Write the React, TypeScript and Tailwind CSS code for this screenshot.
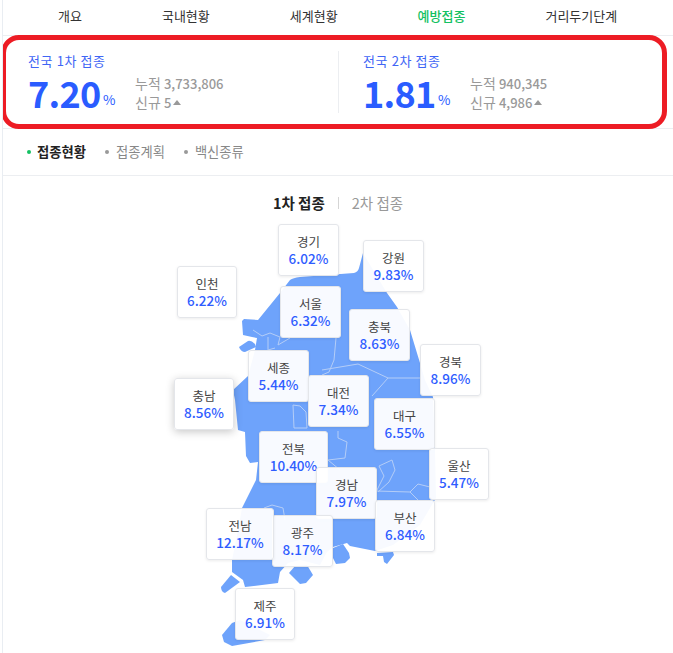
const navItems = [
  { label: "개요", active: false },
  { label: "국내현황", active: false },
  { label: "세계현황", active: false },
  { label: "예방접종", active: true },
  { label: "거리두기단계", active: false },
];

// 지도 위 라벨: 위치 자체가 콘텐츠라 absolute 사용
const regions = [
  { name: "경기", value: "6.02%", pos: "left-[275px] top-[48px] w-[61px]" },
  { name: "강원", value: "9.83%", pos: "left-[360px] top-[64px] w-[61px]" },
  { name: "인천", value: "6.22%", pos: "left-[174px] top-[90px] w-[60px]" },
  { name: "서울", value: "6.32%", pos: "left-[277px] top-[110px] w-[61px]" },
  { name: "충북", value: "8.63%", pos: "left-[346px] top-[133px] w-[61px]" },
  { name: "경북", value: "8.96%", pos: "left-[417px] top-[168px] w-[61px]" },
  { name: "세종", value: "5.44%", pos: "left-[245px] top-[174px] w-[61px]" },
  { name: "충남", value: "8.56%", pos: "left-[171px] top-[202px] w-[60px] shadow-[0_2px_8px_rgba(0,0,0,0.22)]" },
  { name: "대전", value: "7.34%", pos: "left-[305px] top-[199px] w-[61px]" },
  { name: "대구", value: "6.55%", pos: "left-[371px] top-[222px] w-[61px]" },
  { name: "전북", value: "10.40%", pos: "left-[256px] top-[255px] w-[69px]" },
  { name: "울산", value: "5.47%", pos: "left-[426px] top-[272px] w-[60px]" },
  { name: "경남", value: "7.97%", pos: "left-[313px] top-[291px] w-[61px]" },
  { name: "부산", value: "6.84%", pos: "left-[372px] top-[324px] w-[60px]" },
  { name: "광주", value: "8.17%", pos: "left-[269px] top-[339px] w-[61px]" },
  { name: "전남", value: "12.17%", pos: "left-[203px] top-[332px] w-[68px]" },
  { name: "제주", value: "6.91%", pos: "left-[232px] top-[412px] w-[60px]" },
];

function KoreaMap() {
  return (
    <svg
      className="absolute left-0 top-0"
      width="670"
      height="477"
      viewBox="3 176 670 477"
    >
      <g fill="#6ea3fb">
        <path d="M290 280 Q293 278 300 277 L354 273 Q358 272 359 268 L363 253 L387 293 L397 307 L410 330 L420 363 L425 380 L433 397 L435 448 L436 498 L420 525 L393 545 L375 551 L350 546 L347 543 L333 547 L327 552 L320 565 L300 560 L288 563 L280 572 L278 583 L245 587 L243 580 L232 572 L232 560 L238 530 L242 508 L256 480 L258 462 L250 463 L246 456 L245 432 L238 430 L235 400 L233 390 L248 376 L255 350 L257 338 L252 337 L243 335 L242 321 L244 319 L258 320 L280 293 Z" />
        <path d="M239 347 L248 341 Q251 340 255 344 L256 347 L245 352 Q241 352 239 347 Z" />
        <path d="M333 548 L343 544 L349 553 L350 558 L345 563 L336 564 L333 558 Z" />
        <path d="M377 553 L393 552 L394 555 L387 564 L384 562 L383 556 L377 556 Z" />
        <path d="M289 573 L300 584 L306 583 L313 575 L307 565 L295 566 Z" />
        <path d="M221 587 L231 575 L240 582 L225 593 Q221 592 221 587 Z" />
        <path d="M222 635 L232 623 L240 620 L270 635 L265 640 L232 646 L224 642 Z" />
      </g>
      <g fill="none" stroke="#b4cdf7" strokeWidth="1">
        <path d="M253 330 L262 336 L270 333 L280 337 L278 345 L290 338" />
        <path d="M268 337 L268 350 L275 348" />
        <path d="M336 338 L334 360 L329 372 L322 375" />
        <path d="M322 370 L358 364 L388 378 L420 378" />
        <path d="M388 378 L372 396" />
        <path d="M293 405 L300 406 L306 412 L307 428 L294 428 L293 405" />
        <path d="M338 431 L338 438 L347 442 L345 458 L328 460 L340 470" />
        <path d="M376 492 L384 476 L379 466 L392 460 L395 470 L389 482 L378 492" />
        <path d="M376 491 L410 492 L418 484 L430 487" />
        <path d="M410 492 L418 500" />
        <path d="M264 508 L272 505 L283 508 L285 520" />
      </g>
    </svg>
  );
}

function StatBlock({
  label,
  value,
  total,
  added,
  className,
}: {
  label: string;
  value: string;
  total: string;
  added: string;
  className: string;
}) {
  return (
    <div className={className}>
      <p className="h-[18px] text-[13px] leading-[18px] tracking-[0.6px] text-[#3f66f5]">{label}</p>
      <div className="flex items-start">
        <span className="mt-[1px] w-[75px] text-[36px] font-bold leading-[42px] tracking-[-0.7px] text-[#2a5cff]">
          {value}
        </span>
        <span className="mt-[19px] mr-[20px] w-[12px] text-[13.5px] leading-[20px] text-[#2a5cff]">%</span>
        <div className="mt-[4px] text-[14px] leading-[18px] text-[#999999]">
          <p>
            누적 <span className="text-[13px] font-medium">{total}</span>
          </p>
          <p className="flex items-center gap-[2px]">
            <span>
              신규 <span className="text-[13px] font-medium">{added}</span>
            </span>
            <span className="mt-[1px] h-0 w-0 border-x-[4px] border-b-[5px] border-x-transparent border-b-[#999999]" />
          </p>
        </div>
      </div>
    </div>
  );
}

export default function App() {
  return (
    <div
      className="ml-[2px] h-[653px] w-[671px] overflow-hidden border-l border-[#e9edf2] bg-white text-[#222222]"
      style={{ fontFamily: '"Noto Sans CJK KR", "Noto Sans", sans-serif' }}
    >
      <nav className="flex h-[35px] items-center gap-[80px] pb-[3px] pl-[55px] text-[13px]">
        {navItems.map((item) => (
          <span
            key={item.label}
            className={item.active ? "font-medium text-[#14c162]" : "text-[#333333]"}
          >
            {item.label}
          </span>
        ))}
      </nav>

      <div className="border-y border-[#eceef1]">
        <div className="-my-px -ml-[2px] flex h-[94px] w-[666px] items-center rounded-[18px] border-[5px] border-[#ed1c24] bg-white">
          <StatBlock
            className="w-[332px] pl-[22px]"
            label="전국 1차 접종"
            value="7.20"
            total="3,733,806"
            added="5"
          />
          <div className="h-[62px] w-px bg-[#eceef1]" />
          <StatBlock
            className="pl-[24px]"
            label="전국 2차 접종"
            value="1.81"
            total="940,345"
            added="4,986"
          />
        </div>
      </div>

      <div className="flex h-[47px] items-center gap-[19px] border-b border-[#eceef1] pl-[24px] text-[13.3px]">
        <span className="flex items-center gap-[6px] font-bold text-[#222222]">
          <span className="size-[4px] rounded-full bg-[#14c162]" />
          접종현황
        </span>
        <span className="flex items-center gap-[7px] text-[#888888]">
          <span className="size-[4px] rounded-full bg-[#999999]" />
          접종계획
        </span>
        <span className="flex items-center gap-[7px] text-[#888888]">
          <span className="size-[4px] rounded-full bg-[#999999]" />
          백신종류
        </span>
      </div>

      <div className="relative h-[477px]">
        <KoreaMap />
        <div className="flex h-[54px] items-center justify-center gap-[13px] text-[14.5px]">
          <span className="font-bold text-[#222222]">1차 접종</span>
          <span className="h-[12px] w-px bg-[#d5d5d5]" />
          <span className="text-[#999999]">2차 접종</span>
        </div>
        {regions.map((r) => (
          <div
            key={r.name}
            className={`absolute flex h-[52px] flex-col items-center justify-center rounded-[3px] border border-[#e4e6ea] bg-white/95 shadow-[0_1px_3px_rgba(0,0,0,0.08)] ${r.pos}`}
          >
            <span className="text-[12.5px] leading-[17px] text-[#444444]">{r.name}</span>
            <span className="text-[13.5px] font-medium leading-[17px] text-[#2f5dff]">{r.value}</span>
          </div>
        ))}
      </div>
    </div>
  );
}
